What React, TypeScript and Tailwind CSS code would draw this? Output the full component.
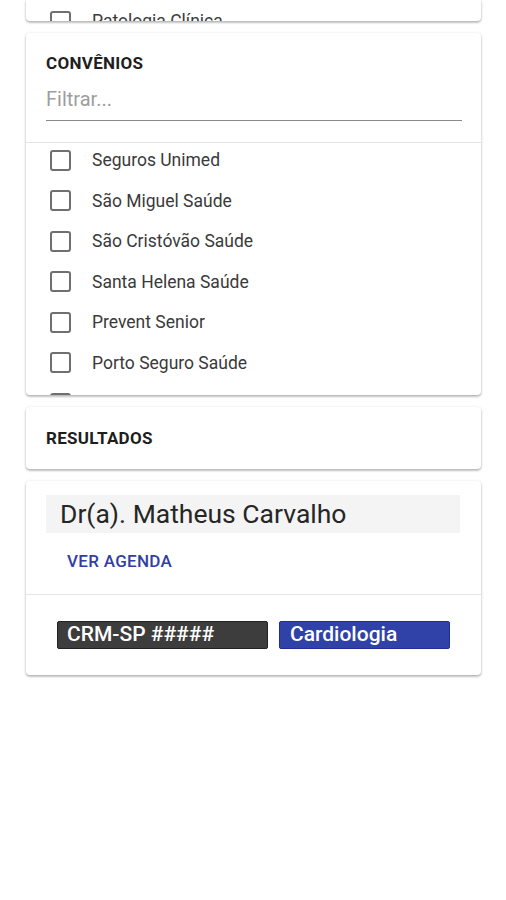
import React from 'react';

const convenios = [
  'Seguros Unimed',
  'São Miguel Saúde',
  'São Cristóvão Saúde',
  'Santa Helena Saúde',
  'Prevent Senior',
  'Porto Seguro Saúde',
  'Amil Saúde',
];

const card = 'bg-white rounded-[4px] shadow-[0_1px_3px_rgba(0,0,0,0.25),0_2px_2px_rgba(0,0,0,0.12)]';

const CheckRow: React.FC<{ label: string }> = ({ label }) => (
  <div className="flex items-center h-[40.5px] shrink-0">
    <span className="w-[21px] h-[21px] rounded-[3px] border-2 border-[#6f6f6f] ml-[24px] shrink-0" />
    <span className="ml-[21px] text-[17.5px] text-[#3a3a3a]">{label}</span>
  </div>
);

export default function App() {
  return (
    <div className="w-[506px] h-[900px] bg-white overflow-hidden" style={{ fontFamily: 'Roboto, "Liberation Sans", sans-serif' }}>
      <div className="px-[26px] flex flex-col gap-[12px] w-[507px]">
        {/* previous filter card, scrolled mostly out of view */}
        <div className={`${card} h-[21px] overflow-hidden rounded-t-none`}>
          <div className="flex items-center h-[40.5px] mt-[1px]">
            <span className="w-[21px] h-[21px] rounded-[3px] border-2 border-[#6f6f6f] ml-[24px] shrink-0" />
            <span className="ml-[21px] text-[17.5px] text-[#3a3a3a]">Patologia Clínica</span>
          </div>
        </div>

        {/* convenios */}
        <div className={`${card} h-[362px] overflow-hidden flex flex-col`}>
          <div className="px-[20px] pt-[19px]">
            <div className="text-[17px] font-bold text-[#1e1e1e] leading-[22px] tracking-[0.3px]">CONVÊNIOS</div>
            <div className="mt-[14px] border-b border-[#8a8a8a] pb-[7px] mr-[-1px]">
              <span className="text-[20px] text-[#9e9e9e] leading-[22px]">Filtrar...</span>
            </div>
          </div>
          <div className="mt-[21px] border-t border-[#e4e4e4] flex flex-col">
            <div className="-mt-[3px] flex flex-col">
              {convenios.map((c) => (
                <CheckRow key={c} label={c} />
              ))}
            </div>
          </div>
        </div>

        {/* resultados */}
        <div className={`${card} h-[62px] px-[20px] flex items-center`}>
          <div className="text-[17px] font-bold text-[#1e1e1e] tracking-[0.3px] pt-[1px]">RESULTADOS</div>
        </div>

        {/* medico */}
        <div className={`${card} h-[194px] flex flex-col`}>
          <div className="px-[20px] pt-[14px]">
            <div className="bg-[#f4f4f4] h-[38px] flex items-center pl-[14px] mr-[1px]">
              <span className="text-[26.5px] text-[#262626]">Dr(a). Matheus Carvalho</span>
            </div>
            <div className="h-[61px] flex items-center pl-[21px] pb-[4px]">
              <span className="text-[17px] font-medium text-[#2f3fa3] tracking-[0.3px]">VER AGENDA</span>
            </div>
          </div>
          <div className="border-t border-[#e6e6e6] px-[31px] pt-[26px] flex gap-[11px]">
            <div className="w-[211px] h-[28px] bg-[#3d3d3d] rounded-[2px] border border-[#222] flex items-center pl-[9px]">
              <span className="text-[21px] font-medium text-white">CRM-SP #####</span>
            </div>
            <div className="w-[171px] h-[28px] bg-[#3042a8] rounded-[2px] border border-[#1f2f95] flex items-center pl-[10px]">
              <span className="text-[21px] font-medium text-white">Cardiologia</span>
            </div>
          </div>
        </div>
      </div>
    </div>
  );
}
